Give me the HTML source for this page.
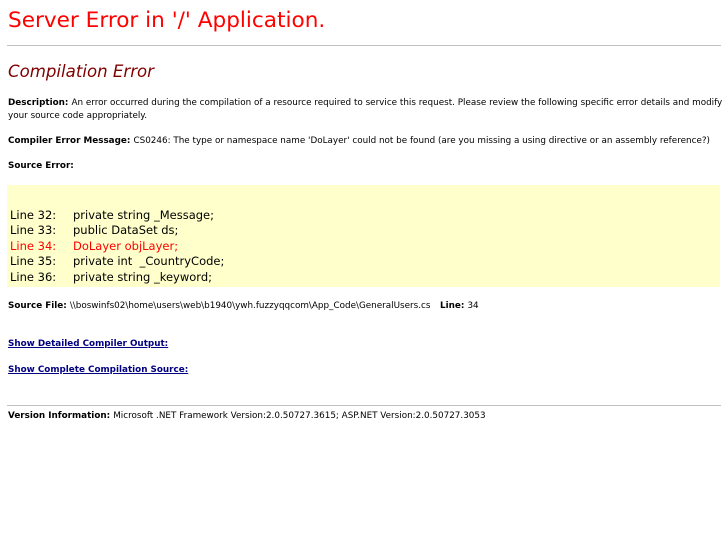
<!DOCTYPE html>
<html><head><meta charset="utf-8"><style>
body{margin:0;background:#fff;font-family:"DejaVu Sans",Verdana,sans-serif;color:#000;width:727px;height:545px;overflow:hidden;position:relative}
.a{position:absolute;left:8px;white-space:nowrap}
.s{font-size:8.8px;line-height:13px}
b{font-weight:bold}
hr{position:absolute;left:7px;width:714px;margin:0;border:0;height:1px;background:#c0c0c0}
a{color:#000080;font-weight:bold;text-decoration:underline}
.code{position:absolute;left:7px;top:185px;width:713px;height:102px;background:#ffffcc}
.cl{position:absolute;font-size:11.5px;line-height:15.5px;white-space:pre}
</style></head><body>
<div class="a" style="top:7px;font-size:21.6px;line-height:28px;color:#ff0000">Server Error in '/' Application.</div>
<hr style="top:45px">
<div class="a" style="top:59px;font-size:16.6px;line-height:26px;color:#800000;font-style:italic">Compilation Error</div>
<div class="a s" style="top:97px;white-space:normal;width:715px"><b>Description: </b>An error occurred during the compilation of a resource required to service this request. Please review the following specific error details and modify your source code appropriately.</div>
<div class="a s" style="top:135px"><b>Compiler Error Message: </b>CS0246: The type or namespace name 'DoLayer' could not be found (are you missing a using directive or an assembly reference?)</div>
<div class="a s" style="top:160px"><b>Source Error:</b></div>
<div class="code"></div>
<div class="cl" style="top:207.5px;left:10px">Line 32:
Line 33:
<span style="color:#ff0000">Line 34:</span>
Line 35:
Line 36:</div>
<div class="cl" style="top:207.5px;left:73px">private string _Message;
public DataSet ds;
<span style="color:#ff0000">DoLayer objLayer;</span>
private int  _CountryCode;
private string _keyword;</div>
<div class="a s" style="top:300px"><b>Source File: </b>\\boswinfs02\home\users\web\b1940\ywh.fuzzyqqcom\App_Code\GeneralUsers.cs</div>
<div class="a s" style="top:300px;left:440px"><b>Line: </b>34</div>
<div class="a s" style="top:338px"><a>Show Detailed Compiler Output:</a></div>
<div class="a s" style="top:364px"><a>Show Complete Compilation Source:</a></div>
<hr style="top:405px">
<div class="a s" style="top:410px"><b>Version Information: </b>Microsoft .NET Framework Version:2.0.50727.3615; ASP.NET Version:2.0.50727.3053</div>
</body></html>
